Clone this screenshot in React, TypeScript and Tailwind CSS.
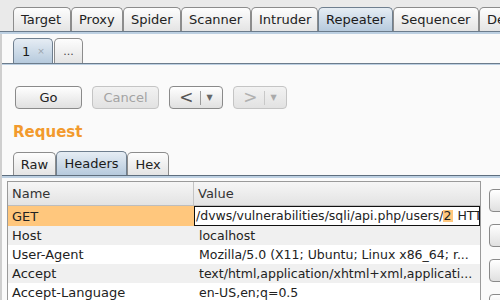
import React from "react";

const topTabs = [
  { label: "Target", w: "w-[58px]" },
  { label: "Proxy", w: "w-[52px]" },
  { label: "Spider", w: "w-[58px]" },
  { label: "Scanner", w: "w-[70px]" },
  { label: "Intruder", w: "w-[67px]" },
  { label: "Repeater", w: "w-[75px]" },
  { label: "Sequencer", w: "w-[86px]" },
  { label: "Decoder", w: "w-[70px]" },
];

const rows = [
  { name: "Host", value: "localhost" },
  { name: "User-Agent", value: "Mozilla/5.0 (X11; Ubuntu; Linux x86_64; r..." },
  { name: "Accept", value: "text/html,application/xhtml+xml,applicati..." },
  { name: "Accept-Language", value: "en-US,en;q=0.5" },
];

function Tab({ label, active, className = "" }: { label: React.ReactNode; active?: boolean; className?: string }) {
  return (
    <div
      className={
        "flex items-center justify-center rounded-t-[5px] border border-b-0 " +
        (active
          ? "border-[#6f7f8f] bg-gradient-to-b from-[#e6edf4] to-[#b6cadd] text-[#1a1a1a]"
          : "border-[#8c8c8c] bg-gradient-to-b from-[#fdfdfd] to-[#e4e4e4] text-[#222]") +
        " " +
        className
      }
    >
      {label}
    </div>
  );
}

function Btn({ children, disabled, className = "" }: { children: React.ReactNode; disabled?: boolean; className?: string }) {
  return (
    <div
      className={
        "flex h-[23px] items-center justify-center rounded-[4px] border bg-gradient-to-b " +
        (disabled
          ? "border-[#c4c4c4] from-[#f2f2f2] to-[#e2e2e2] text-[#a3a3a3]"
          : "border-[#8a8a8a] from-[#ffffff] to-[#e0e0e0] text-[#222]") +
        " " +
        className
      }
    >
      {children}
    </div>
  );
}

export default function App() {
  return (
    <div
      className="flex h-[300px] w-[500px] flex-col overflow-hidden bg-[#fafafa] text-[13px] leading-none text-[#222]"
      style={{ fontFamily: '"DejaVu Sans", sans-serif' }}
    >
      {/* main tab bar */}
      <div className="flex h-[31px] shrink-0 items-end overflow-hidden bg-[#eaeaea] pl-[13px]">
        {topTabs.map((t) => (
          <Tab
            key={t.label}
            label={t.label}
            active={t.label === "Repeater"}
            className={"h-[24px] shrink-0 justify-start pl-[7px] " + t.w}
          />
        ))}
      </div>
      <div className="h-[1px] shrink-0 bg-[#6c7c8c]" />
      <div className="h-[2px] shrink-0 bg-[#bdd0e2]" />

      <div className="flex flex-1 flex-col border-l-[2px] border-[#cfcfcf]">
        {/* repeater sub tabs */}
        <div className="flex h-[29px] shrink-0 items-end gap-[1px] pl-[11px]">
          <Tab
            active
            className="h-[25px] w-[40px] justify-start pl-[8px]"
            label={
              <span className="flex items-center gap-[7px]">
                <span>1</span>
                <span className="text-[9px] text-[#9aa3ab]">×</span>
              </span>
            }
          />
          <Tab label={<span className="text-[11px] text-[#444]">...</span>} className="h-[25px] w-[29px]" />
        </div>
        <div className="h-[1px] shrink-0 bg-[#6c7c8c]" />
        <div className="h-[1px] shrink-0 bg-[#bdd0e2]" />

        {/* action buttons */}
        <div className="mt-[21px] flex shrink-0 gap-[10px] pl-[13px]">
          <Btn className="w-[67px]">Go</Btn>
          <Btn disabled className="w-[67px]">Cancel</Btn>
          <Btn className="w-[54px] gap-[6px]">
            <span className="text-[17px] text-[#555]">&lt;</span>
            <span className="h-[14px] w-[1px] bg-[#9a9a9a]" />
            <span className="text-[8px] text-[#666]">▼</span>
          </Btn>
          <Btn disabled className="w-[54px] gap-[6px]">
            <span className="text-[17px] text-[#b0b0b0]">&gt;</span>
            <span className="h-[14px] w-[1px] bg-[#c8c8c8]" />
            <span className="text-[8px] text-[#aaa]">▼</span>
          </Btn>
        </div>

        {/* request label */}
        <div className="mt-[16px] shrink-0 pl-[11px] text-[15px] font-bold text-[#f29a2e]">Request</div>

        {/* request tabs */}
        <div className="mt-[11px] flex h-[24px] shrink-0 items-end pl-[11px]">
          <Tab label="Raw" className="h-[23px] w-[43px]" />
          <Tab label="Headers" active className="h-[24px] w-[71px]" />
          <Tab label="Hex" className="h-[23px] w-[42px]" />
        </div>
        <div className="h-[1px] shrink-0 bg-[#5e6e7e]" />
        <div className="h-[2px] shrink-0 bg-[#bdd0e2]" />

        {/* table + side buttons */}
        <div className="mt-[3px] flex flex-1 gap-[8px] pl-[5px]">
          <div className="flex w-[474px] shrink-0 flex-col border border-[#9a9a9a] bg-white">
            <div className="flex h-[24px] shrink-0 items-center border-b border-[#bdbdbd] bg-gradient-to-b from-[#f6f6f6] to-[#e3e3e3] text-[#333]">
              <div className="flex h-full w-[186px] items-center border-r border-[#c4c4c4] pl-[4px]">Name</div>
              <div className="pl-[4px]">Value</div>
            </div>
            <div className="flex h-[20px] shrink-0 items-center">
              <div className="flex h-full w-[186px] items-center bg-[#ffc77d] pl-[4px]">GET</div>
              <div className="flex h-full min-w-0 flex-1 items-center overflow-hidden whitespace-pre border border-[#111] pl-[1px] text-[12.5px]">
                /dvws/vulnerabilities/sqli/api.php/users/<span className="bg-[#ffc77d] pr-[2px]">2</span> HTTP/1.1
              </div>
            </div>
            {rows.map((r, i) => (
              <div
                key={r.name}
                className={"flex h-[19px] shrink-0 items-center leading-[19px] " + (i % 2 === 0 ? "bg-[#f0f0f0]" : "bg-white")}
              >
                <div className="w-[186px] pl-[4px]">{r.name}</div>
                <div className="min-w-0 flex-1 whitespace-nowrap pl-[5px] text-[12.5px]">{r.value}</div>
              </div>
            ))}
          </div>
          <div className="flex flex-col gap-[12px] pt-[8px]">
            {[0, 1, 2, 3].map((k) => (
              <div
                key={k}
                className="h-[23px] w-[40px] shrink-0 rounded-[4px] border border-[#8a8a8a] bg-gradient-to-b from-white to-[#e0e0e0]"
              />
            ))}
          </div>
        </div>
      </div>
    </div>
  );
}
